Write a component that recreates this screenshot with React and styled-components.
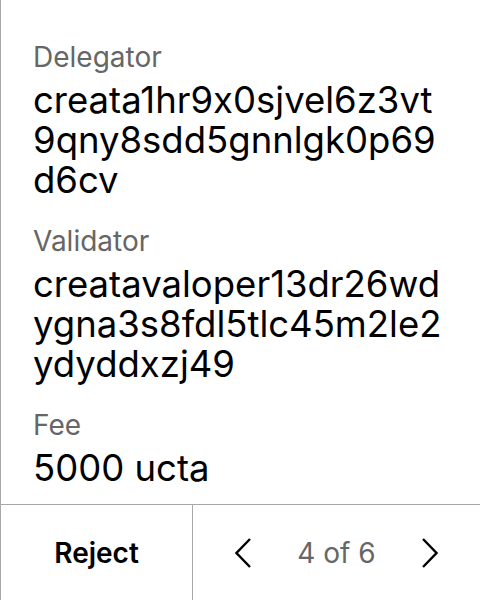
import React from "react";
import styled, { createGlobalStyle } from "styled-components";

const GlobalStyle = createGlobalStyle`
  html, body {
    margin: 0;
    padding: 0;
    background: #ffffff;
  }
  body {
    font-family: Inter, "Noto Sans", sans-serif;
    font-feature-settings: "calt" 0;
  }
`;

const Screen = styled.div`
  width: 480px;
  height: 600px;
  box-sizing: border-box;
  border-left: 1px solid #a8a8a8;
  display: flex;
  flex-direction: column;
  background: #fff;
  overflow: hidden;
`;

const Details = styled.div`
  flex: 1;
  padding: 40px 32px 0 32px;
  display: flex;
  flex-direction: column;
  gap: 24px;
  overflow: hidden;
`;

const Field = styled.div`
  display: flex;
  flex-direction: column;
  gap: 6px;
`;

const Label = styled.div`
  font-size: 28px;
  line-height: 34px;
  color: #666666;
`;

const Value = styled.div`
  font-size: 36.5px;
  line-height: 40px;
  color: #000;
  word-break: break-all;
`;

const Footer = styled.div`
  height: 96px;
  box-sizing: border-box;
  flex-shrink: 0;
  border-top: 1px solid #a8a8a8;
  display: flex;
`;

const RejectButton = styled.button`
  width: 192px;
  border: none;
  border-right: 1px solid #a8a8a8;
  background: transparent;
  font-family: inherit;
  font-size: 28px;
  font-weight: 600;
  color: #000;
  padding: 0;
  cursor: pointer;
`;

const Pager = styled.div`
  flex: 1;
  display: flex;
  align-items: center;
  justify-content: space-between;
  padding: 0 42px;
`;

const Arrow = styled.button`
  border: none;
  background: transparent;
  padding: 0;
  width: 16px;
  height: 30px;
  display: flex;
  align-items: center;
  justify-content: center;
  cursor: pointer;
`;

const PageText = styled.span`
  font-size: 28px;
  color: #666666;
`;

const Chevron = ({ dir }) => (
  <svg width="16" height="30" viewBox="0 0 16 30" fill="none">
    <path
      d={dir === "left" ? "M15 1 L1.5 15 L15 29" : "M1 1 L14.5 15 L1 29"}
      stroke="#000"
      strokeWidth="2.4"
    />
  </svg>
);

const fields = [
  { label: "Delegator", value: "creata1hr9x0sjvel6z3vt9qny8sdd5gnnlgk0p69d6cv" },
  { label: "Validator", value: "creatavaloper13dr26wdygna3s8fdl5tlc45m2le2ydyddxzj49" },
  { label: "Fee", value: "5000 ucta" },
];

export default function App() {
  return (
    <>
      <GlobalStyle />
      <Screen>
        <Details>
          {fields.map((f) => (
            <Field key={f.label}>
              <Label>{f.label}</Label>
              <Value>{f.value}</Value>
            </Field>
          ))}
        </Details>
        <Footer>
          <RejectButton>Reject</RejectButton>
          <Pager>
            <Arrow aria-label="Previous">
              <Chevron dir="left" />
            </Arrow>
            <PageText>4 of 6</PageText>
            <Arrow aria-label="Next">
              <Chevron dir="right" />
            </Arrow>
          </Pager>
        </Footer>
      </Screen>
    </>
  );
}
